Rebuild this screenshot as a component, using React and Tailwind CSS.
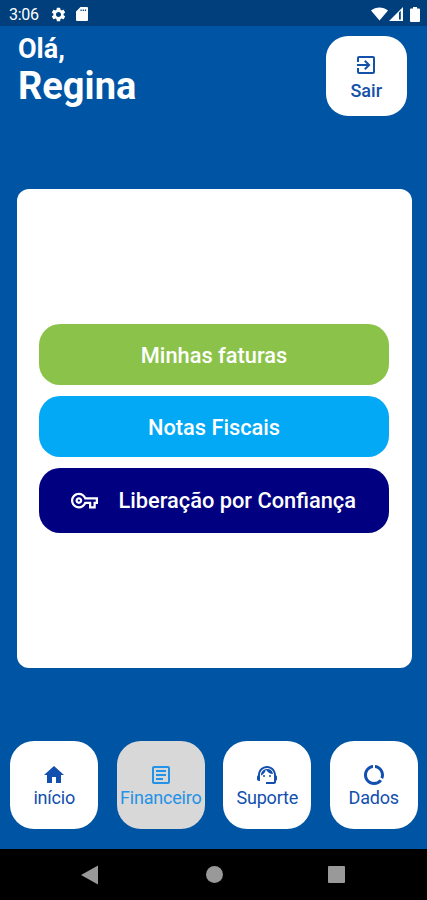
import React from "react";
import {
  MdDataUsage,
  MdExitToApp,
  MdHome,
  MdOutlineArticle,
  MdOutlineVpnKey,
  MdSettings,
  MdSupportAgent,
} from "react-icons/md";

const tabs = [
  { label: "início", Icon: MdHome },
  { label: "Financeiro", Icon: MdOutlineArticle, active: true },
  { label: "Suporte", Icon: MdSupportAgent },
  { label: "Dados", Icon: MdDataUsage },
];

const StatusBar = () => (
  <div className="flex h-[26px] shrink-0 items-center bg-[#003f7b] pl-[9px] pr-[7.5px] pt-0.5 text-white">
    <span className="w-[41px] pt-px text-[16px] leading-none tracking-[-0.3px]">3:06</span>
    <MdSettings className="size-[17px]" />
    <svg viewBox="0 0 12 14" className="ml-[9px] h-[14px] w-3" fill="currentColor">
      <path
        fillRule="evenodd"
        d="M4.5 0H11a1 1 0 0 1 1 1v12a1 1 0 0 1-1 1H1a1 1 0 0 1-1-1V4.5zM4.500 2.500V4h1.200V2.500zm2.200 0V4h1.200V2.500zm2.200 0V4h1.200V2.500z"
      />
    </svg>
    <div className="ml-auto flex items-center">
      <svg viewBox="0 0 17 14" className="h-[14px] w-[17px]" fill="currentColor">
        <path d="M8.5 13.5 0 3.4C4.8-.5 12.2-.5 17 3.4z" />
      </svg>
      <svg viewBox="0 0 14 14" className="ml-px h-[14px] w-[14px]" fill="currentColor">
        <path fillRule="evenodd" d="M0 14 14 0v14zM10 5.500v7h1.800v-8.800z" />
      </svg>
      <svg viewBox="0 0 10 15" className="ml-[7px] h-[15px] w-[10px]" fill="currentColor">
        <path d="M3 0h4v1.500h2a1 1 0 0 1 1 1V14a1 1 0 0 1-1 1H1a1 1 0 0 1-1-1V2.500a1 1 0 0 1 1-1h2z" />
      </svg>
    </div>
  </div>
);

const Header = () => (
  <header className="flex h-[163px] shrink-0 items-start justify-between pl-[18px] pr-[20.5px]">
    <div className="pt-[7px] font-bold text-white">
      <p className="text-[27px] leading-[32px]">Olá,</p>
      <h1 className="text-[38px] leading-[42px]">Regina</h1>
    </div>
    <button className="mt-[10px] flex h-20 w-[80.5px] flex-col items-center rounded-[22px] bg-white pt-[17px] text-[#1451a8]">
      <MdExitToApp className="size-6" />
      <span className="mt-0.5 text-[18px] font-medium leading-[23px]">Sair</span>
    </button>
  </header>
);

const BottomTabs = () => (
  <nav className="mt-[73px] grid h-[108px] shrink-0 grid-cols-4 justify-items-center pl-px">
    {tabs.map(({ label, Icon, active }) => (
      <button
        key={label}
        className={`flex h-[88px] w-[88px] flex-col items-center rounded-[24px] pt-[22px] ${
          active ? "bg-[#d8d8d8] text-[#2492e6]" : "bg-white text-[#124fae]"
        }`}
      >
        <Icon className="size-6" />
        <span className="text-[18px] leading-[22px] tracking-[-0.2px]">{label}</span>
      </button>
    ))}
  </nav>
);

const AndroidNav = () => (
  <div className="flex h-[51px] shrink-0 items-center bg-black pl-[81px] text-[#999999]">
    <svg viewBox="0 0 17 20" className="h-5 w-[17px]" fill="currentColor">
      <path d="M17 .5v19L0 10z" />
    </svg>
    <span className="ml-[107.5px] size-[17px] rounded-full bg-[#999999]" />
    <span className="ml-[105.5px] size-[17px] rounded-[1px] bg-[#999999]" />
  </div>
);

const App = () => {
  return (
    <div className="flex h-[900px] w-[427px] flex-col overflow-hidden bg-[#0054a4] font-[Roboto,sans-serif]">
      <StatusBar />
      <Header />

      {/* Menu card */}
      <main className="ml-[16.5px] flex h-[479px] w-[395px] shrink-0 flex-col items-center justify-center rounded-xl bg-white text-[21.8px] font-medium text-white">
        <button className="h-[61px] w-[350px] rounded-[21px] bg-[#8bc34a] pt-[3px]">Minhas faturas</button>
        <button className="mt-[11px] h-[60.5px] w-[350px] rounded-[21px] bg-[#03a9f4] pt-[3px]">Notas Fiscais</button>
        <button className="mt-[11.5px] flex h-[64.5px] w-[350px] items-center rounded-[21px] bg-[#000080] pl-[31.5px]">
          <MdOutlineVpnKey className="size-[27px]" />
          <span className="ml-[21px] pt-0.5">Liberação por Confiança</span>
        </button>
      </main>

      <BottomTabs />
      <AndroidNav />
    </div>
  );
};

export default App;
